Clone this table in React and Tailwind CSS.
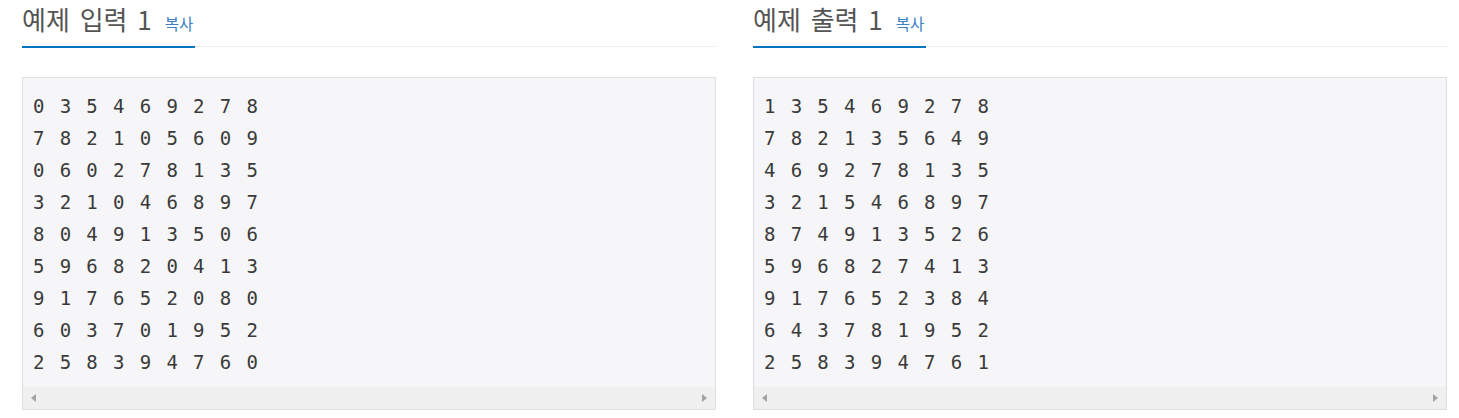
import React from "react";

const input = [
  "0 3 5 4 6 9 2 7 8",
  "7 8 2 1 0 5 6 0 9",
  "0 6 0 2 7 8 1 3 5",
  "3 2 1 0 4 6 8 9 7",
  "8 0 4 9 1 3 5 0 6",
  "5 9 6 8 2 0 4 1 3",
  "9 1 7 6 5 2 0 8 0",
  "6 0 3 7 0 1 9 5 2",
  "2 5 8 3 9 4 7 6 0",
];
const output = [
  "1 3 5 4 6 9 2 7 8",
  "7 8 2 1 3 5 6 4 9",
  "4 6 9 2 7 8 1 3 5",
  "3 2 1 5 4 6 8 9 7",
  "8 7 4 9 1 3 5 2 6",
  "5 9 6 8 2 7 4 1 3",
  "9 1 7 6 5 2 3 8 4",
  "6 4 3 7 8 1 9 5 2",
  "2 5 8 3 9 4 7 6 1",
];

function Sample({ title, lines }) {
  return (
    <div className="flex flex-col">
      <div className="border-b border-dotted border-[#dcdcdc] h-[47px]">
        <h2
          className="inline-flex items-baseline h-[48px] w-[173px] border-b-2 border-[#0076c0] text-[#555555]"
          style={{ fontFamily: '"Noto Sans CJK KR", "Noto Sans", sans-serif' }}
        >
          <span className="text-[26px] leading-[38px] [word-spacing:4px]">{title}</span>
          <span className="ml-[13px] text-[15.5px] text-[#3a7fc4]">복사</span>
        </h2>
      </div>
      <div className="mt-[30px] border border-[#dedee3] bg-[#f6f6f8]">
        <pre
          className="pt-[12px] pb-[9px] pl-[10px] text-[19px] leading-[32px] tracking-[1.9px] text-[#3a3a3a]"
          style={{ fontFamily: '"DejaVu Sans Mono", monospace' }}
        >
          {lines.join("\n")}
        </pre>
        <div className="h-[22px] bg-[#f0f0f0] flex items-center justify-between px-[8px]">
          <div className="w-0 h-0 border-y-[4.5px] border-y-transparent border-r-[5px] border-r-[#a3a3a3]" />
          <div className="w-0 h-0 border-y-[4.5px] border-y-transparent border-l-[5px] border-l-[#a3a3a3]" />
        </div>
      </div>
    </div>
  );
}

export default function App() {
  return (
    <div className="w-[1459px] h-[418px] bg-white grid grid-cols-[694px_694px] gap-x-[37px] pl-[22px]">
      <Sample title="예제 입력 1" lines={input} />
      <Sample title="예제 출력 1" lines={output} />
    </div>
  );
}
